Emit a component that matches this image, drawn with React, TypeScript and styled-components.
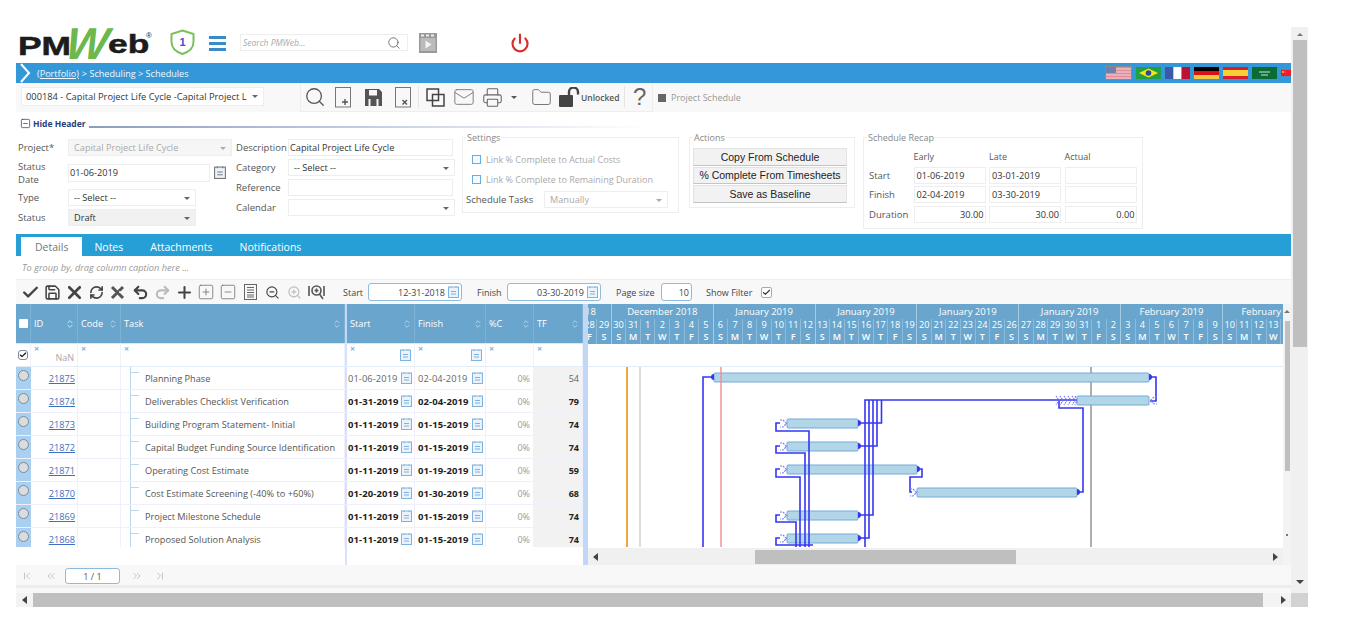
import React from 'react';
import { createGlobalStyle, styled } from 'styled-components';
import {
  Check,
  ChevronFirst,
  ChevronLast,
  ChevronsLeft,
  ChevronsRight,
  ChevronsUpDown,
  Folder,
  Mail,
  Plus,
  Power,
  Printer,
  Redo2,
  RefreshCw,
  Save,
  Search,
  SquareMinus,
  SquarePlus,
  Undo2,
  X,
  ZoomIn,
  ZoomOut,
} from 'lucide-react';

const GlobalStyle = createGlobalStyle`
  html, body {
    margin: 0;
    padding: 0;
    background: #fff;
  }
  * {
    box-sizing: border-box;
  }
`;

const COLUMNS = '15px 47px 43px 224px 70px 71px 48px 49px';
const DAY_W = 14.55;

const rows = [
  { id: '21875', task: 'Planning Phase', start: '01-06-2019', finish: '02-04-2019', tf: 54, bold: false },
  { id: '21874', task: 'Deliverables Checklist Verification', start: '01-31-2019', finish: '02-04-2019', tf: 79, bold: true },
  { id: '21873', task: 'Building Program Statement- Initial', start: '01-11-2019', finish: '01-15-2019', tf: 74, bold: true },
  { id: '21872', task: 'Capital Budget Funding Source Identification', start: '01-11-2019', finish: '01-15-2019', tf: 74, bold: true },
  { id: '21871', task: 'Operating Cost Estimate', start: '01-11-2019', finish: '01-19-2019', tf: 59, bold: true },
  { id: '21870', task: 'Cost Estimate Screening (-40% to +60%)', start: '01-20-2019', finish: '01-30-2019', tf: 68, bold: true },
  { id: '21869', task: 'Project Milestone Schedule', start: '01-11-2019', finish: '01-15-2019', tf: 74, bold: true },
  { id: '21868', task: 'Proposed Solution Analysis', start: '01-11-2019', finish: '01-15-2019', tf: 74, bold: true },
];

const weeks = [
  { label: 'November 2018', days: [23, 24, 25, 26, 27, 28, 29] },
  { label: 'December 2018', days: [30, 31, 1, 2, 3, 4, 5] },
  { label: 'January 2019', days: [6, 7, 8, 9, 10, 11, 12] },
  { label: 'January 2019', days: [13, 14, 15, 16, 17, 18, 19] },
  { label: 'January 2019', days: [20, 21, 22, 23, 24, 25, 26] },
  { label: 'January 2019', days: [27, 28, 29, 30, 31, 1, 2] },
  { label: 'February 2019', days: [3, 4, 5, 6, 7, 8, 9] },
  { label: 'February 2019', days: [10, 11, 12, 13, 14, 15, 16] },
];
const LETTERS = ['S', 'M', 'T', 'W', 'T', 'F', 'S'];

const bars = [
  { x: 714, w: 435, y: 373 },
  { x: 1077, w: 72, y: 396 },
  { x: 787, w: 71, y: 419 },
  { x: 787, w: 71, y: 442 },
  { x: 787, w: 130, y: 465 },
  { x: 917, w: 160, y: 488 },
  { x: 787, w: 71, y: 511 },
  { x: 787, w: 71, y: 534 },
];

const links = [
  '703,547 703,377 714,377',
  '1149,377 1156,377 1156,401 1150,401',
  '865,547 865,400 1077,400',
  '869,400 869,538 858,538',
  '873,400 873,515 858,515',
  '877,400 877,446 858,446',
  '881.5,400 881.5,423 858,423',
  '780,423 776,423 776,431 809,431 809,547',
  '780,446 776,446 776,453 805,453 805,547',
  '780,469 776,469 776,477 800,477 800,547',
  '780,515 776,515 776,522 796,522 796,547',
  '780,538 776,538 776,545 813,545',
  '917,469 922,469 922,477 910,477 910,492 912,492',
  '1077,492 1083,492 1083,408 1059,408 1059,400',
];

const flagBase = { width: 25, height: 12 };

const UsFlag = () => (
  <FlagFrame $on>
    <svg viewBox="0 0 25 12" {...flagBase}>
      <rect width="25" height="12" fill="#e08a98" />
      <path d="M0 2h25M0 5h25M0 8h25M0 11h25" stroke="#f3d8dc" strokeWidth="1" />
      <rect width="10" height="6" fill="#6f7fae" />
    </svg>
  </FlagFrame>
);

const BrazilFlag = () => (
  <FlagFrame>
    <svg viewBox="0 0 25 12" {...flagBase}>
      <rect width="25" height="12" fill="#229e45" />
      <path d="M12.5 1.5 22 6l-9.5 4.5L3 6z" fill="#f8e509" />
      <circle cx="12.5" cy="6" r="2.8" fill="#2b49a3" />
    </svg>
  </FlagFrame>
);

const FranceFlag = () => (
  <FlagFrame>
    <svg viewBox="0 0 25 12" {...flagBase}>
      <rect width="8.4" height="12" fill="#3a5aa8" />
      <rect x="8.4" width="8.2" height="12" fill="#fff" />
      <rect x="16.6" width="8.4" height="12" fill="#bb1133" />
    </svg>
  </FlagFrame>
);

const GermanyFlag = () => (
  <FlagFrame>
    <svg viewBox="0 0 25 12" {...flagBase}>
      <rect width="25" height="4" fill="#000" />
      <rect y="4" width="25" height="4" fill="#dd1111" />
      <rect y="8" width="25" height="4" fill="#f5c842" />
    </svg>
  </FlagFrame>
);

const SpainFlag = () => (
  <FlagFrame>
    <svg viewBox="0 0 25 12" {...flagBase}>
      <rect width="25" height="12" fill="#d8202c" />
      <rect y="3" width="25" height="6" fill="#f7d038" />
    </svg>
  </FlagFrame>
);

const SaudiFlag = () => (
  <FlagFrame>
    <svg viewBox="0 0 25 12" {...flagBase}>
      <rect width="25" height="12" fill="#0b6b35" />
      <path d="M7 5h11M9 8h7" stroke="#cfe6d6" strokeWidth="1" />
    </svg>
  </FlagFrame>
);

const ChinaFlag = () => (
  <FlagFrame $clip>
    <svg viewBox="0 0 25 12" {...flagBase}>
      <rect width="25" height="12" fill="#ee1c25" />
      <circle cx="4" cy="4" r="1.8" fill="#ffde00" />
      <circle cx="8" cy="2" r=".7" fill="#ffde00" />
      <circle cx="9" cy="5" r=".7" fill="#ffde00" />
    </svg>
  </FlagFrame>
);

const PageIcon = ({ mark }: { mark: 'plus' | 'x' }) => (
  <svg width="18" height="21" viewBox="0 0 18 21" fill="none" stroke="#555">
    <rect x="1.5" y=".5" width="15" height="19.5" stroke="#777" />
    {mark === 'plus' ? (
      <path d="M8 15h6M11 12v6" strokeWidth="1.4" />
    ) : (
      <path d="M8.5 13l4.5 4.5M13 13l-4.5 4.5" strokeWidth="1.4" />
    )}
  </svg>
);

const SolidSave = () => (
  <svg width="17" height="17" viewBox="0 0 17 17">
    <path d="M0 0h14l3 3v14H0z" fill="#555" />
    <rect x="4" y="1" width="8" height="5.5" fill="#f8f8f8" />
    <rect x="3.5" y="10" width="10" height="7" fill="#f8f8f8" />
    <rect x="5.5" y="10" width="6" height="7" fill="#555" />
  </svg>
);

const DoubleSquare = () => (
  <svg width="19" height="19" viewBox="0 0 19 19" fill="none" stroke="#444" strokeWidth="1.5">
    <rect x="1" y="1" width="11.5" height="11.5" />
    <rect x="6.500" y="6.500" width="11.5" height="11.5" />
  </svg>
);

const OpenLock = () => (
  <svg width="22" height="20" viewBox="0 0 22 20">
    <rect x="0" y="8" width="14" height="12" rx="1" fill="#444" />
    <path d="M10 8V5a4.5 4.5 0 0 1 9 0v2.5" fill="none" stroke="#444" strokeWidth="2.4" />
  </svg>
);

const FitZoom = () => (
  <svg width="17" height="17" viewBox="0 0 17 17" fill="none" stroke="#555" strokeWidth="1.6">
    <path d="M1 2v10M16 2v10" />
    <circle cx="8.5" cy="6.5" r="4.5" />
    <path d="M11.5 10l3.5 5M6.5 6.5h4M8.5 4.5v4" />
  </svg>
);

const ExcelX = () => (
  <svg width="16" height="15" viewBox="0 0 16 15" fill="none" stroke="#555" strokeWidth="3">
    <path d="M2 2l11 11M13 2L2 13" />
    <path d="M9 7h6" strokeWidth="1.5" stroke="#f8f8f8" />
  </svg>
);

const ListPage = () => (
  <svg width="13" height="16" viewBox="0 0 13 16" fill="none" stroke="#666">
    <rect x=".5" y=".5" width="12" height="15" />
    <path d="M3 3.500h7M3 6h7M3 8.500h7M3 11h7M3 13h7" />
  </svg>
);

const CalendarMark = ({ $tone = '#7fb2de', $size = 11 }: { $tone?: string; $size?: number }) => (
  <svg width={$size} height={$size + 1} viewBox="0 0 11 12" fill="#eaf3fb" stroke={$tone}>
    <rect x=".5" y="1" width="10" height="10.5" />
    <path d="M3 .5v1.5M8 .5v1.5M3 5.500h5M3 8h5" />
  </svg>
);

const App = () => {
  return (
    <Page>
      <GlobalStyle />
      <Frame>
        <Main>
          <TopBar>
            <Logo>
              <LogoPm>PM</LogoPm>
              <LogoW>W</LogoW>
              <LogoEb>eb</LogoEb>
              <LogoReg>®</LogoReg>
            </Logo>
            <ShieldWrap>
              <svg width="25" height="26" viewBox="0 0 25 26" fill="#fff" stroke="#7cc05c" strokeWidth="2">
                <path d="M12.5 1.5 23.5 5v8c0 6-5 10-11 12C6.500 23 1.500 19 1.500 13V5z" />
                <text x="12.5" y="17" textAnchor="middle" fontSize="11" fontFamily="Liberation Sans" fontWeight="700" fill="#4a4ad8" stroke="none">
                  1
                </text>
              </svg>
            </ShieldWrap>
            <Burger>
              <span />
              <span />
              <span />
            </Burger>
            <SearchBox>
              <span>Search PMWeb...</span>
              <Search size={14} strokeWidth={1.5} color="#666" />
            </SearchBox>
            <FilmIcon>
              <svg width="18" height="20" viewBox="0 0 18 20">
                <rect width="18" height="20" fill="#999" />
                <path d="M2 2.500h3M7 2.500h3M12 2.500h3" stroke="#eee" strokeWidth="2" />
                <rect x="1.500" y="5" width="15" height="13" fill="#bbb" />
                <path d="M6.500 7.500v8l6-4z" fill="#f4f4f4" />
              </svg>
            </FilmIcon>
            <PowerWrap>
              <Power size={20} strokeWidth={2.6} color="#d8302c" />
            </PowerWrap>
          </TopBar>

          <Crumbs>
            <CrumbArrow>
              <svg width="12" height="20" viewBox="0 0 12 20" fill="none" stroke="#fff" strokeWidth="2">
                <path d="M2 1l8 9-8 9" />
              </svg>
            </CrumbArrow>
            <CrumbLink>(Portfolio)</CrumbLink>
            <span>&gt; Scheduling &gt; Schedules</span>
            <Flags>
              <UsFlag />
              <BrazilFlag />
              <FranceFlag />
              <GermanyFlag />
              <SpainFlag />
              <SaudiFlag />
              <ChinaFlag />
            </Flags>
          </Crumbs>

          <ActionRow>
            <RecordSelect>
              <span>000184 - Capital Project Life Cycle -Capital Project L</span>
              <Caret />
            </RecordSelect>
            <ActionTools>
              <ActionIcon $w={24} $ml={2}>
                <Search size={22} strokeWidth={1.4} color="#555" />
              </ActionIcon>
              <ActionIcon $w={18} $ml={7}>
                <PageIcon mark="plus" />
              </ActionIcon>
              <ActionIcon $w={17} $ml={13}>
                <SolidSave />
              </ActionIcon>
              <ActionIcon $w={18} $ml={12}>
                <PageIcon mark="x" />
              </ActionIcon>
              <ToolDivider />
              <ActionIcon $w={20} $ml={6}>
                <DoubleSquare />
              </ActionIcon>
              <ActionIcon $w={22} $ml={8}>
                <Mail size={22} strokeWidth={1} color="#777" />
              </ActionIcon>
              <ActionIcon $w={21} $ml={7}>
                <Printer size={21} strokeWidth={1.2} color="#666" />
              </ActionIcon>
              <SmallCaret />
              <ActionIcon $w={21} $ml={14}>
                <Folder size={21} strokeWidth={1} color="#666" />
              </ActionIcon>
              <ActionIcon $w={22} $ml={7}>
                <OpenLock />
              </ActionIcon>
              <UnlockedText>Unlocked</UnlockedText>
              <ToolDivider />
              <HelpMark>?</HelpMark>
            </ActionTools>
            <ScheduleTag>
              <i />
              Project Schedule
            </ScheduleTag>
          </ActionRow>

          <HideHeader>
            <SquareMinus size={11} strokeWidth={1.6} color="#1f3f7a" />
            <b>Hide Header</b>
            <HeaderRule />
          </HideHeader>

          <FormArea>
            <LabelGrid $cols="50px 164px" $ml={2}>
              <FieldLabel>Project*</FieldLabel>
              <Field $tone="disabled">
                Capital Project Life Cycle
                <Caret $light />
              </Field>
              <FieldLabel>
                Status
                <br />
                Date
              </FieldLabel>
              <DateLine>
                <Field $w={142} $h={18} $pad={1}>
                  01-06-2019
                </Field>
                <CalendarMark $tone="#777" $size={12} />
              </DateLine>
              <FieldLabel>Type</FieldLabel>
              <Field $w={128}>
                -- Select --
                <Caret />
              </Field>
              <FieldLabel>Status</FieldLabel>
              <Field $w={128} $tone="muted">
                Draft
                <Caret />
              </Field>
            </LabelGrid>

            <LabelGrid $cols="52px 167px" $ml={4} $rows="17px 17px 17px 17px">
              <FieldLabel>Description</FieldLabel>
              <Field $w={165} $pad={1}>Capital Project Life Cycle</Field>
              <FieldLabel>Category</FieldLabel>
              <Field>
                -- Select --
                <Caret />
              </Field>
              <FieldLabel>Reference</FieldLabel>
              <Field $w={165} />
              <FieldLabel>Calendar</FieldLabel>
              <Field>
                <Caret />
              </Field>
            </LabelGrid>

            <Group $w={217} $h={82} $ml={7}>
              <legend>Settings</legend>
              <SettingLine>
                <TickBox />
                Link % Complete to Actual Costs
              </SettingLine>
              <SettingLine>
                <TickBox />
                Link % Complete to Remaining Duration
              </SettingLine>
              <TaskMode>
                <FieldLabel>Schedule Tasks</FieldLabel>
                <Field $w={124} $tone="disabledWhite">
                  Manually
                  <Caret $light />
                </Field>
              </TaskMode>
            </Group>

            <Group $w={166} $h={77} $ml={10}>
              <legend>Actions</legend>
              <ActionButtons>
                <PlainButton>Copy From Schedule</PlainButton>
                <PlainButton>% Complete From Timesheets</PlainButton>
                <PlainButton>Save as Baseline</PlainButton>
              </ActionButtons>
            </Group>

            <Group $w={280} $h={98} $ml={8}>
              <legend>Schedule Recap</legend>
              <RecapGrid>
                <span />
                <RecapHead>Early</RecapHead>
                <RecapHead>Late</RecapHead>
                <RecapHead>Actual</RecapHead>
                <FieldLabel>Start</FieldLabel>
                <RecapField>01-06-2019</RecapField>
                <RecapField>03-01-2019</RecapField>
                <RecapField />
                <FieldLabel>Finish</FieldLabel>
                <RecapField>02-04-2019</RecapField>
                <RecapField>03-30-2019</RecapField>
                <RecapField />
                <FieldLabel>Duration</FieldLabel>
                <RecapField $num>30.00</RecapField>
                <RecapField $num>30.00</RecapField>
                <RecapField $num>0.00</RecapField>
              </RecapGrid>
            </Group>
          </FormArea>

          <Tabs>
            <Tab $active>Details</Tab>
            <Tab>Notes</Tab>
            <Tab>Attachments</Tab>
            <Tab>Notifications</Tab>
          </Tabs>

          <GroupHint>To group by, drag column caption here ...</GroupHint>

          <GridTools>
            <GridIcon><Check size={19} strokeWidth={3} /></GridIcon>
            <GridIcon><Save size={17} strokeWidth={2.2} /></GridIcon>
            <GridIcon><X size={21} strokeWidth={3} /></GridIcon>
            <GridIcon><RefreshCw size={15} strokeWidth={2.6} /></GridIcon>
            <GridIcon><ExcelX /></GridIcon>
            <GridIcon><Undo2 size={17} strokeWidth={3} /></GridIcon>
            <GridIcon $faint><Redo2 size={17} strokeWidth={3} /></GridIcon>
            <GridIcon><Plus size={19} strokeWidth={2.6} /></GridIcon>
            <GridIcon $thin><SquarePlus size={18} strokeWidth={1} /></GridIcon>
            <GridIcon $thin><SquareMinus size={18} strokeWidth={1} /></GridIcon>
            <GridIcon><ListPage /></GridIcon>
            <GridIcon><ZoomOut size={15} strokeWidth={1.8} /></GridIcon>
            <GridIcon $faint><ZoomIn size={15} strokeWidth={1.8} /></GridIcon>
            <GridIcon><FitZoom /></GridIcon>
            <ToolText $w={20} $ml={16}>Start</ToolText>
            <DateInput $w={94} $ml={5}>
              12-31-2018
              <CalendarMark />
            </DateInput>
            <ToolText $w={25} $ml={15}>Finish</ToolText>
            <DateInput $w={94} $ml={5}>
              03-30-2019
              <CalendarMark />
            </DateInput>
            <ToolText $w={40} $ml={15}>Page size</ToolText>
            <DateInput $w={31} $ml={5}>10</DateInput>
            <ToolText $w={48} $ml={14}>Show Filter</ToolText>
            <FilterTick>
              <Check size={9} strokeWidth={3} color="#333" />
            </FilterTick>
          </GridTools>

          <GridSplit>
            <LeftPane>
              <HeadRow>
                <HeadCell>
                  <HeadBox />
                </HeadCell>
                <HeadCell>ID<ChevronsUpDown size={10} strokeWidth={1.6} /></HeadCell>
                <HeadCell>Code<ChevronsUpDown size={10} strokeWidth={1.2} /></HeadCell>
                <HeadCell>Task<ChevronsUpDown size={10} strokeWidth={1.2} /></HeadCell>
                <HeadCell $split>Start<ChevronsUpDown size={10} strokeWidth={1.2} /></HeadCell>
                <HeadCell>Finish<ChevronsUpDown size={10} strokeWidth={1.2} /></HeadCell>
                <HeadCell>%C<ChevronsUpDown size={10} strokeWidth={1.2} /></HeadCell>
                <HeadCell>TF<ChevronsUpDown size={10} strokeWidth={1.2} /></HeadCell>
              </HeadRow>
              <FilterRow>
                <FilterCell $center>
                  <RowTick>
                    <Check size={8} strokeWidth={3.5} color="#111" />
                  </RowTick>
                </FilterCell>
                <FilterCell>
                  <FilterX>×</FilterX>
                  <NanText>NaN</NanText>
                </FilterCell>
                <FilterCell><FilterX>×</FilterX></FilterCell>
                <FilterCell><FilterX>×</FilterX></FilterCell>
                <FilterCell $split>
                  <FilterX>×</FilterX>
                  <FilterCal><CalendarMark /></FilterCal>
                </FilterCell>
                <FilterCell>
                  <FilterX>×</FilterX>
                  <FilterCal><CalendarMark /></FilterCal>
                </FilterCell>
                <FilterCell><FilterX>×</FilterX></FilterCell>
                <FilterCell><FilterX>×</FilterX></FilterCell>
              </FilterRow>
              <RowsClip>
                {rows.map((row) => (
                  <DataRow key={row.id}>
                    <RailCell>
                      <Radio />
                    </RailCell>
                    <IdCell>
                      <a href="#21875">{row.id}</a>
                    </IdCell>
                    <DataCell />
                    <TaskCell>
                      <TreeMark />
                      {row.task}
                    </TaskCell>
                    <DateCell $bold={row.bold} $split>
                      {row.start}
                      <CalendarMark />
                    </DateCell>
                    <DateCell $bold={row.bold}>
                      {row.finish}
                      <CalendarMark />
                    </DateCell>
                    <PercentCell>0%</PercentCell>
                    <FloatCell $bold={row.bold}>{row.tf}</FloatCell>
                  </DataRow>
                ))}
              </RowsClip>
              <TailRow>
                <span />
                <span />
                <span />
                <span />
                <TailSplit />
              </TailRow>
            </LeftPane>

            <Splitter />

            <GanttPane>
              <TimeHead>
                <TimeStrip>
                  {weeks.map((week, w) => (
                    <Week key={w}>
                      <WeekLabel>{week.label}</WeekLabel>
                      <WeekDays>
                        {week.days.map((day, d) => (
                          <Day key={d}>
                            <span>{day}</span>
                            <b>{LETTERS[d]}</b>
                          </Day>
                        ))}
                      </WeekDays>
                    </Week>
                  ))}
                </TimeStrip>
              </TimeHead>
              <GanttFilter />
              <GanttChart>
                <svg width="695" height="180" viewBox="588 367 695 180" fill="none">
                  <path d="M627 367v180" stroke="#f5a53f" strokeWidth="2" />
                  <path d="M640 367v180" stroke="#bdbdbd" />
                  <path d="M1091 367v180" stroke="#8c8c8c" strokeWidth="1.4" />
                  {bars.map((bar, i) => (
                    <g key={i}>
                      <rect x={bar.x} y={bar.y} width={bar.w} height={9} rx="1" fill="#b2d6e8" stroke="#72aada" />
                    </g>
                  ))}
                  <path d="M721 367v180" stroke="#f08f8f" strokeWidth="1.4" />
                  {links.map((points) => (
                    <polyline key={points} points={points} stroke="#3636f2" strokeWidth="1.6" />
                  ))}
                  {bars.slice(2).map((bar) => (
                    <path
                      key={`${bar.x}-${bar.y}`}
                      d={`M${bar.x - 7} ${bar.y + 1}h3l3.500 3.500-3.500 3.500h-3`}
                      stroke="#7a7af2"
                      strokeWidth="1.2"
                      strokeDasharray="2 1"
                    />
                  ))}
                  <path d="M1157 397h-3l-3.500 3.500 3.500 3.500h3" stroke="#7a7af2" strokeWidth="1.2" strokeDasharray="2 1" />
                  {[0, 1, 2, 3, 4].map((i) => (
                    <path
                      key={i}
                      d={`M${1056 + i * 4} 396l3 4.500-3 4.500`}
                      stroke="#6a6af0"
                      strokeWidth="1.100"
                      strokeDasharray="1.500 1"
                    />
                  ))}
                  <path d="M1075 396l2 4.500-2 4.500" stroke="#7a7af2" strokeWidth="1.200" strokeDasharray="2 1" />
                  {[
                    [1149, 377],
                    [858, 423],
                    [858, 446],
                    [917, 469],
                    [1077, 492],
                    [858, 515],
                    [858, 538],
                  ].map(([x, y]) => (
                    <path key={`${x}-${y}`} d={`M${x} ${y - 3}a3 3 0 0 1 0 6z`} fill="#3636f2" />
                  ))}
                  <path d="M714 374a3 3 0 0 0 0 6z" fill="#3636f2" />
                </svg>
              </GanttChart>
              <GanttScroll>
                <ScrollArrow $dir="left" />
                <GanttThumb />
                <ScrollArrow $dir="right" />
              </GanttScroll>
            </GanttPane>

            <InnerScroll>
              <ArrowUp />
              <InnerThumb />
              <InnerDot />
            </InnerScroll>
          </GridSplit>

          <Pager>
            <PagerIcon><ChevronFirst size={12} /></PagerIcon>
            <PagerIcon $ml={12}><ChevronsLeft size={12} /></PagerIcon>
            <PageField>1 / 1</PageField>
            <PagerIcon $ml={11}><ChevronsRight size={12} /></PagerIcon>
            <PagerIcon $ml={11}><ChevronLast size={12} /></PagerIcon>
          </Pager>
          <PagerEdge />

          <PageScroll>
            <ScrollArrow $dir="left" />
            <PageThumb />
            <ScrollArrow $dir="right" />
          </PageScroll>
        </Main>

        <OuterScroll>
          <OuterTop>
            <ArrowUp />
          </OuterTop>
          <OuterThumb />
          <OuterBottom>
            <ArrowDown />
          </OuterBottom>
          <OuterCorner />
        </OuterScroll>
      </Frame>
    </Page>
  );
};

export default App;

const Page = styled.div`
  width: 1352px;
  height: 627px;
  padding: 27px 0 0 16px;
  overflow: hidden;
  background: #fff;
  font-family: 'Open Sans', 'Liberation Sans', sans-serif;
  font-size: 9.5px;
  color: #444;
`;

const Frame = styled.div`
  display: grid;
  grid-template-columns: 1275px 17px;
  height: 580px;
`;

const Main = styled.div`
  display: flex;
  flex-direction: column;
  min-width: 0;
`;

const TopBar = styled.header`
  display: flex;
  align-items: center;
  height: 36px;
  padding-left: 2px;
  flex: none;
`;

const Logo = styled.div`
  position: relative;
  display: flex;
  align-items: center;
  width: 134px;
  height: 36px;
  color: #1c1c1c;
  font-family: 'Liberation Sans', sans-serif;
  font-weight: 700;
  font-size: 26px;
  -webkit-text-stroke: 0.5px #1c1c1c;
`;

const LogoPm = styled.span`
  display: inline-block;
  transform: scaleX(1.36);
  transform-origin: left center;
  margin-top: 3px;
`;

const LogoW = styled.span`
  position: absolute;
  left: 52px;
  top: -9px;
  color: #6cb84c;
  font-style: italic;
  font-size: 33px;
  -webkit-text-stroke: 0;
  transform: scale(1.35, 1.35) skewX(-8deg);
  transform-origin: left top;
`;

const LogoEb = styled.span`
  position: absolute;
  left: 90px;
  top: 2px;
  transform: scaleX(1.36);
  transform-origin: left center;
`;

const LogoReg = styled.span`
  position: absolute;
  left: 128px;
  top: 4px;
  font-size: 8px;
  font-weight: 400;
  -webkit-text-stroke: 0;
`;

const ShieldWrap = styled.div`
  display: flex;
  margin-left: 18px;
  margin-top: -6px;
`;

const Burger = styled.div`
  display: flex;
  flex-direction: column;
  gap: 3px;
  width: 17px;
  margin-left: 14px;
  margin-top: -4px;

  span {
    height: 3px;
    background: #3a8cc9;
  }
`;

const SearchBox = styled.div`
  display: flex;
  align-items: center;
  justify-content: space-between;
  width: 168px;
  height: 17px;
  margin-left: 14px;
  margin-top: -5px;
  padding: 0 6px 0 2px;
  border: 1px solid #eee;
  color: #aaa;
  font-style: italic;
  font-size: 8.5px;
`;

const FilmIcon = styled.div`
  display: flex;
  margin-left: 11px;
  margin-top: -4px;
`;

const PowerWrap = styled.div`
  display: flex;
  margin-left: 73px;
  margin-top: -5px;
`;

const Crumbs = styled.nav`
  display: flex;
  align-items: center;
  flex: none;
  height: 20px;
  background: #3498d8;
  color: #f2f8fc;
  font-size: 9.1px;
`;

const CrumbArrow = styled.div`
  display: flex;
  margin: 0 6px 0 3px;
`;

const CrumbLink = styled.a`
  margin-right: 3px;
  text-decoration: underline;
`;

const Flags = styled.div`
  display: flex;
  align-items: center;
  gap: 4px;
  margin-left: auto;
  width: 186px;
  overflow: hidden;
`;

const FlagFrame = styled.div<{ $on?: boolean; $clip?: boolean }>`
  display: flex;
  flex: none;
  width: ${({ $on, $clip }) => ($on ? '27px' : $clip ? '13px' : '25px')};
  overflow: hidden;
  border: ${({ $on }) => ($on ? '1px solid #8a8a8a' : 'none')};
`;

const ActionRow = styled.div`
  display: flex;
  align-items: flex-start;
  flex: none;
  height: 29px;
  background: #f8f8f8;
`;

const RecordSelect = styled.div`
  display: flex;
  align-items: center;
  justify-content: space-between;
  width: 243px;
  height: 19px;
  margin: 4px 0 0 5px;
  padding: 0 5px 0 4px;
  background: #fff;
  border: 1px solid #eee;
  color: #333;
  font-size: 9.3px;
  white-space: nowrap;
`;

const Caret = styled.i<{ $light?: boolean }>`
  position: absolute;
  right: 5px;
  top: 50%;
  margin-top: -1px;
  width: 0;
  height: 0;
  border-left: 3px solid transparent;
  border-right: 3px solid transparent;
  border-top: 3px solid ${({ $light }) => ($light ? '#aaa' : '#666')};

  ${RecordSelect} & {
    position: static;
    margin: 0;
  }
`;

const ActionTools = styled.div`
  display: flex;
  align-items: center;
  width: 353px;
  height: 29px;
  margin-left: 36px;
  border-left: 1px solid #eee;
  border-right: 1px solid #eee;
  border-bottom: 1px solid #eee;
`;

const ActionIcon = styled.div<{ $w: number; $ml: number }>`
  display: flex;
  justify-content: center;
  flex: none;
  width: ${({ $w }) => $w}px;
  margin-left: ${({ $ml }) => $ml}px;
`;

const ToolDivider = styled.div`
  flex: none;
  width: 1px;
  height: 22px;
  margin-left: 6px;
  background: #e6e6e6;
`;

const SmallCaret = styled.i`
  flex: none;
  width: 0;
  height: 0;
  margin-left: 8px;
  border-left: 3px solid transparent;
  border-right: 3px solid transparent;
  border-top: 3px solid #555;
`;

const UnlockedText = styled.span`
  flex: none;
  width: 37px;
  margin-left: 0;
  font-size: 8.5px;
  font-weight: 600;
  color: #555;
`;

const HelpMark = styled.span`
  flex: none;
  margin-left: 8px;
  font-family: 'Liberation Sans', sans-serif;
  font-size: 24px;
  line-height: 1;
  color: #666;
`;

const ScheduleTag = styled.div`
  display: flex;
  align-items: center;
  gap: 5px;
  height: 29px;
  margin-left: 5px;
  color: #999;
  font-size: 9px;

  i {
    width: 8px;
    height: 8px;
    background: #666;
  }
`;

const HideHeader = styled.div`
  display: flex;
  align-items: center;
  flex: none;
  height: 18px;
  padding: 5px 0 0 4px;
  gap: 2px;
  color: #1f3f7a;
  font-size: 8.5px;
`;

const HeaderRule = styled.div`
  align-self: flex-end;
  width: 560px;
  height: 2px;
  margin: 0 0 2px 1px;
  background: linear-gradient(90deg, #8c9cc4, #ffffff);
`;

const FormArea = styled.section`
  display: flex;
  align-items: flex-start;
  flex: none;
  height: 104px;
`;

const LabelGrid = styled.div<{ $cols: string; $ml: number; $rows?: string }>`
  display: grid;
  grid-template-columns: ${({ $cols }) => $cols};
  grid-template-rows: ${({ $rows }) => $rows ?? '17px 27px 17px 17px'};
  gap: 3px 0;
  align-items: center;
  margin: 9px 0 0 ${({ $ml }) => $ml}px;
`;

const FieldLabel = styled.span`
  color: #555;
  font-size: 9.5px;
  line-height: 13px;
`;

const fieldTones = {
  plain: 'background:#fff;color:#333;',
  disabled: 'background:#f6f6f6;color:#aaa;',
  disabledWhite: 'background:#fff;color:#aaa;',
  muted: 'background:#f1f1f1;color:#333;',
};

const Field = styled.div<{ $w?: number; $h?: number; $pad?: number; $tone?: keyof typeof fieldTones }>`
  position: relative;
  display: flex;
  align-items: center;
  width: ${({ $w }) => ($w ? `${$w}px` : '100%')};
  height: ${({ $h }) => $h ?? 17}px;
  padding: 0 ${({ $pad }) => $pad ?? 5}px;
  border: 1px solid #eee;
  font-size: 9.2px;
  ${({ $tone }) => fieldTones[$tone ?? 'plain']}
`;

const DateLine = styled.div`
  display: flex;
  align-items: center;
  gap: 4px;
`;

const Group = styled.fieldset<{ $w: number; $h: number; $ml: number }>`
  flex: none;
  width: ${({ $w }) => $w}px;
  height: ${({ $h }) => $h}px;
  margin: 1px 0 0 ${({ $ml }) => $ml}px;
  padding: 0 3px;
  border: 1px solid #eee;
  min-width: 0;

  legend {
    padding: 0 1px;
    margin-left: 0;
    color: #888;
    font-size: 9px;
    line-height: 13px;
  }
`;

const SettingLine = styled.div`
  display: flex;
  align-items: center;
  gap: 5px;
  height: 20px;
  padding-left: 6px;
  color: #aaa;
  font-size: 9px;

  &:first-of-type {
    margin-top: 5px;
  }
`;

const TickBox = styled.i`
  width: 9px;
  height: 9px;
  background: #f4f9fd;
  border: 1.5px solid #64ade6;
`;

const TaskMode = styled.div`
  display: flex;
  align-items: center;
  justify-content: space-between;
  margin-top: 2px;
  padding-right: 7px;
`;

const ActionButtons = styled.div`
  display: flex;
  flex-direction: column;
  gap: 1px;
  margin: 4px 0 0 0;
`;

const PlainButton = styled.button`
  width: 154px;
  height: 17.500px;
  padding: 0;
  border: 1px solid #e2e2e2;
  border-bottom-color: #c4c4c4;
  background: #f2f2f2;
  color: #222;
  font-family: 'Liberation Sans', sans-serif;
  font-size: 10.500px;
`;

const RecapGrid = styled.div`
  display: grid;
  grid-template-columns: 41px 72px 72px 72px;
  grid-template-rows: 15px 17px 17px 17px;
  column-gap: 3.500px;
  row-gap: 2.500px;
  align-items: center;
  margin: 5px 0 0 2px;
`;

const RecapHead = styled.span`
  color: #555;
  font-size: 9px;
`;

const RecapField = styled.div<{ $num?: boolean }>`
  display: flex;
  align-items: center;
  justify-content: ${({ $num }) => ($num ? 'flex-end' : 'flex-start')};
  height: 17px;
  padding: 0 1px 0 2px;
  border: 1px solid #eee;
  color: #333;
  font-size: 9.200px;
`;

const Tabs = styled.div`
  display: flex;
  align-items: flex-end;
  flex: none;
  height: 22px;
  padding-left: 5px;
  background: #259fd6;
`;

const Tab = styled.div<{ $active?: boolean }>`
  display: flex;
  align-items: center;
  justify-content: center;
  height: 19px;
  padding: 0 14px;
  margin-right: ${({ $active }) => ($active ? '-2px' : '-1px')};
  background: ${({ $active }) => ($active ? '#fff' : 'transparent')};
  color: ${({ $active }) => ($active ? '#777' : '#fff')};
  font-size: 10.500px;
`;

const GroupHint = styled.div`
  display: flex;
  align-items: center;
  flex: none;
  height: 24px;
  padding-left: 6px;
  border-bottom: 1px solid #eee;
  color: #999;
  font-style: italic;
  font-size: 9.200px;
`;

const GridTools = styled.div`
  display: flex;
  align-items: center;
  flex: none;
  height: 24px;
  padding-left: 3px;
  background: #f8f8f8;
`;

const GridIcon = styled.div<{ $faint?: boolean; $thin?: boolean }>`
  display: flex;
  align-items: center;
  justify-content: center;
  flex: none;
  width: 22px;
  color: ${({ $faint, $thin }) => ($faint ? '#bbb' : $thin ? '#666' : '#444')};
`;

const ToolText = styled.span<{ $ml: number; $w: number }>`
  flex: none;
  width: ${({ $w }) => $w}px;
  margin-left: ${({ $ml }) => $ml}px;
  color: #444;
  font-size: 9px;
  white-space: nowrap;
`;

const DateInput = styled.div<{ $w: number; $ml: number }>`
  display: flex;
  align-items: center;
  justify-content: flex-end;
  gap: 3px;
  flex: none;
  width: ${({ $w }) => $w}px;
  height: 18px;
  margin-left: ${({ $ml }) => $ml}px;
  padding: 0 2px 0 0;
  background: #fff;
  border: 1px solid #8fbcdc;
  border-radius: 3px;
  color: #444;
  font-size: 9px;
`;

const FilterTick = styled.div`
  display: flex;
  align-items: center;
  justify-content: center;
  flex: none;
  width: 11px;
  height: 11px;
  margin-left: 7px;
  background: #fff;
  border: 1px solid #8fb0cc;
  border-radius: 2px;
`;

const GridSplit = styled.div`
  display: grid;
  grid-template-columns: 567px 5px 695px 8px;
  flex: none;
  height: 261px;
`;

const LeftPane = styled.div`
  display: flex;
  flex-direction: column;
  min-width: 0;
`;

const HeadRow = styled.div`
  display: grid;
  grid-template-columns: ${COLUMNS};
  flex: none;
  height: 40px;
  background: #69a5cc;
  color: #fff;
  border-bottom: 1px solid #d8e8f4;
`;

const HeadCell = styled.div<{ $split?: boolean }>`
  display: flex;
  align-items: center;
  justify-content: space-between;
  padding: 0 2px 0 3px;
  border-right: 1px solid #7eb2d4;
  border-left: ${({ $split }) => ($split ? '2px solid #c6d6f8' : 'none')};
  font-size: 9.200px;
`;

const HeadBox = styled.i`
  width: 9px;
  height: 9px;
  background: #fff;
  border-radius: 1px;
`;

const FilterRow = styled.div`
  display: grid;
  grid-template-columns: ${COLUMNS};
  flex: none;
  height: 23px;
  border-bottom: 1px solid #e2edf7;
`;

const FilterCell = styled.div<{ $split?: boolean; $center?: boolean }>`
  position: relative;
  display: flex;
  align-items: ${({ $center }) => ($center ? 'center' : 'flex-start')};
  justify-content: ${({ $center }) => ($center ? 'center' : 'flex-start')};
  padding-left: ${({ $center }) => ($center ? 0 : 3)}px;
  border-left: ${({ $split }) => ($split ? '2px solid #d8e0fa' : 'none')};
  border-right: 1px solid #eef2fb;
`;

const FilterX = styled.span`
  color: #7fb2de;
  font-size: 9px;
  font-weight: 700;
  line-height: 10px;
`;

const NanText = styled.span`
  margin: 7px 3px 0 auto;
  color: #aaa;
  font-size: 9px;
`;

const FilterCal = styled.span`
  display: flex;
  margin: 5px 3px 0 auto;
`;

const RowTick = styled.i`
  display: flex;
  align-items: center;
  justify-content: center;
  width: 10px;
  height: 10px;
  background: #fff;
  border: 1px solid #7c8a99;
  border-radius: 3px;
`;

const RowsClip = styled.div`
  flex: none;
  height: 180px;
  overflow: hidden;
`;

const DataRow = styled.div`
  display: grid;
  grid-template-columns: ${COLUMNS};
  height: 23px;
  border-bottom: 1px solid #eff0fb;
`;

const DataCell = styled.div`
  display: flex;
  align-items: center;
  border-right: 1px solid #eff0fb;
`;

const RailCell = styled.div`
  display: flex;
  justify-content: center;
  padding-top: 3px;
  background: #a9d0f0;
`;

const Radio = styled.i`
  width: 11px;
  height: 11px;
  border-radius: 50%;
  background: #d9dde0;
  border: 1px solid #7f8a94;
`;

const IdCell = styled(DataCell)`
  justify-content: flex-end;
  padding-right: 2px;

  a {
    color: #3e6fc2;
    font-size: 9.200px;
  }
`;

const TaskCell = styled(DataCell)`
  color: #555;
  font-size: 9.200px;
  white-space: nowrap;
`;

const TreeMark = styled.i`
  position: relative;
  align-self: stretch;
  flex: none;
  width: 15px;
  margin-left: 9px;
  border-left: 1px solid #bcd6ec;

  &::before {
    content: '';
    position: absolute;
    left: 0;
    top: 5px;
    width: 8px;
    height: 1px;
    background: #bcd6ec;
  }
`;

const DateCell = styled(DataCell)<{ $bold?: boolean; $split?: boolean }>`
  justify-content: space-between;
  padding: 0 2px 0 ${({ $split }) => ($split ? 1 : 3)}px;
  border-left: ${({ $split }) => ($split ? '2px solid #d8e0fa' : 'none')};
  color: ${({ $bold }) => ($bold ? '#222' : '#666')};
  font-weight: ${({ $bold }) => ($bold ? 700 : 400)};
  font-size: ${({ $bold }) => ($bold ? 9.5 : 9.3)}px;
  letter-spacing: 0.1px;
`;

const PercentCell = styled(DataCell)`
  justify-content: flex-end;
  padding-right: 3px;
  color: #999;
  font-size: 9px;
`;

const FloatCell = styled(DataCell)<{ $bold?: boolean }>`
  justify-content: flex-end;
  padding-right: 3px;
  background: #f2f2f2;
  color: ${({ $bold }) => ($bold ? '#222' : '#666')};
  font-weight: ${({ $bold }) => ($bold ? 700 : 400)};
  font-size: 9px;
`;

const TailRow = styled.div`
  display: grid;
  grid-template-columns: ${COLUMNS};
  flex: 1;
`;

const TailSplit = styled.span`
  border-left: 2px solid #d8e0fa;
`;

const Splitter = styled.div`
  background: #c0d8f6;
`;

const GanttPane = styled.div`
  display: flex;
  flex-direction: column;
  min-width: 0;
`;

const TimeHead = styled.div`
  flex: none;
  height: 40px;
  overflow: hidden;
  background: #69a5cc;
`;

const TimeStrip = styled.div`
  display: flex;
  width: max-content;
  margin-left: -78px;
  color: #fff;
`;

const Week = styled.div`
  flex: none;
  width: ${DAY_W * 7}px;
  border-right: 1px solid #a6cbe2;
`;

const WeekLabel = styled.div`
  height: 15px;
  line-height: 15px;
  text-align: center;
  white-space: nowrap;
  font-size: 9.500px;
`;

const WeekDays = styled.div`
  display: flex;
`;

const Day = styled.div`
  display: flex;
  flex-direction: column;
  align-items: center;
  flex: 1;
  min-width: 0;
  height: 25px;
  font-size: 9.200px;
  line-height: 12px;
  border-right: 1px solid #8dbbd8;

  &:last-child {
    border-right: none;
  }

  b {
    font-weight: 600;
    font-size: 9px;
  }
`;

const GanttFilter = styled.div`
  flex: none;
  height: 23px;
  border-bottom: 1px solid #e2edf7;
`;

const GanttChart = styled.div`
  display: flex;
  flex: none;
  height: 180px;
  overflow: hidden;
`;

const GanttScroll = styled.div`
  display: flex;
  align-items: center;
  flex: 1;
  margin-top: 1px;
  padding: 0 5px;
  background: #f0f0f0;
`;

const GanttThumb = styled.div`
  height: 14px;
  width: 261px;
  margin: 0 auto 0 157px;
  background: #bfbfbf;
`;

const ScrollArrow = styled.i<{ $dir: 'left' | 'right' }>`
  flex: none;
  width: 0;
  height: 0;
  border-top: 4px solid transparent;
  border-bottom: 4px solid transparent;
  border-${({ $dir }) => ($dir === 'left' ? 'right' : 'left')}: 5px solid #444;
`;

const InnerScroll = styled.div`
  display: flex;
  flex-direction: column;
  align-items: center;
  background: #f3f3f3;
`;

const ArrowUp = styled.i`
  flex: none;
  width: 0;
  height: 0;
  margin-top: 6px;
  border-left: 3px solid transparent;
  border-right: 3px solid transparent;
  border-bottom: 3px solid #777;
`;

const ArrowDown = styled.i`
  flex: none;
  width: 0;
  height: 0;
  border-left: 4px solid transparent;
  border-right: 4px solid transparent;
  border-top: 4px solid #444;
`;

const InnerThumb = styled.div`
  width: 5px;
  height: 150px;
  margin-top: 8px;
  background: #bfbfbf;
`;

const InnerDot = styled.i`
  width: 2px;
  height: 2px;
  margin-top: 63px;
  background: #777;
`;

const Pager = styled.div`
  display: flex;
  align-items: center;
  flex: none;
  height: 20px;
  padding: 2px 0 0 5px;
  background: #f8f8f8;
`;

const PagerIcon = styled.span<{ $ml?: number }>`
  display: flex;
  margin-left: ${({ $ml }) => $ml ?? 0}px;
  color: #c4c4c4;
`;

const PageField = styled.div`
  display: flex;
  align-items: center;
  justify-content: center;
  width: 55px;
  height: 16px;
  margin-left: 8px;
  background: #fff;
  border: 1px solid #8fbcdc;
  border-radius: 3px;
  color: #555;
  font-size: 9px;
`;

const PagerEdge = styled.div`
  flex: none;
  height: 8px;
  background: linear-gradient(#f8f8f8 0 5px, #ffffff 5px);
  border-top: 3px solid #ececec;
`;

const PageScroll = styled.div`
  display: flex;
  align-items: center;
  flex: none;
  height: 14px;
  padding: 0 5px 0 6px;
  background: #f3f3f3;
`;

const PageThumb = styled.div`
  width: 1230px;
  height: 14px;
  margin: 0 auto 0 6px;
  background: #bfbfbf;
`;

const OuterScroll = styled.div`
  display: flex;
  flex-direction: column;
  background: #f0f0f0;
`;

const OuterTop = styled.div`
  display: flex;
  justify-content: center;
  flex: none;
  height: 13px;
`;

const OuterThumb = styled.div`
  flex: none;
  width: 14px;
  height: 307px;
  margin-left: 2px;
  background: #bfbfbf;
`;

const OuterBottom = styled.div`
  display: flex;
  align-items: flex-end;
  justify-content: center;
  flex: 1;
  padding-bottom: 9px;
`;

const OuterCorner = styled.div`
  flex: none;
  height: 14px;
  background: #d2d2d2;
`;
